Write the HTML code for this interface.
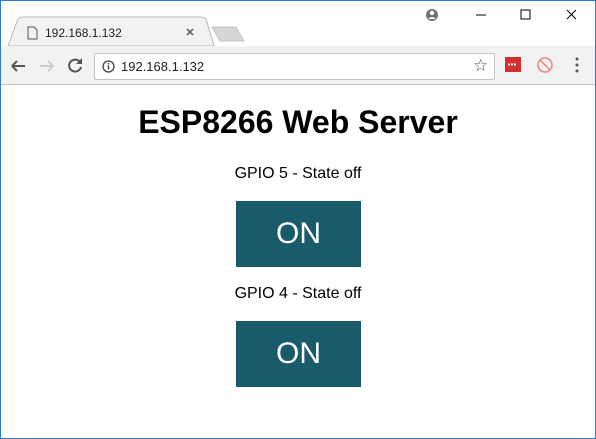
<!DOCTYPE html><html><head><style>
body{margin:0;width:596px;height:439px;overflow:hidden;font-family:"Liberation Sans",sans-serif;position:relative;background:#fff}
.frame{position:absolute;left:0;top:0;width:594px;height:437px;border:1px solid #2b79d0}
.tb{position:absolute;left:1px;top:46px;width:594px;height:38px;background:#f2f2f2;border-bottom:1px solid #c8c8c8}
.addr{position:absolute;left:94px;top:53px;width:399px;height:25px;background:#fff;border:1px solid #c4c4c4;border-radius:2px;font-size:13px;color:#222}
.btn{position:absolute;left:236px;width:125px;height:66px;background:#195b6a;color:#fff;font-size:30px;text-align:center;line-height:66px}
.t{position:absolute;left:0;width:596px;text-align:center}
</style></head><body>
<div class="frame"></div>
<svg style="position:absolute;left:0;top:0" width="596" height="90">
<path d="M8 46 L18 19 Q20 17 24 17 L200 17 Q204 17 206 19 L214 46 Z" fill="#f2f2f2" stroke="#b8b8b8"/>
<path d="M212 27 L236 27 L244 41 L220 41 Z" fill="#d6d6d6" stroke="#c4c4c4"/>
<path d="M28 27h6l3 3v9h-9z" fill="none" stroke="#555"/>
<path d="M187 29l6 6M193 29l-6 6" stroke="#555" stroke-width="1.5"/>
<circle cx="432" cy="15" r="6" fill="#707070"/><circle cx="432" cy="13" r="2.2" fill="#fff"/><path d="M428 19q4-4 8 0" fill="#fff"/>
<path d="M476 15h10" stroke="#000"/><rect x="521" y="10" width="9" height="9" fill="none" stroke="#000"/>
<path d="M567 10l9 9M576 10l-9 9" stroke="#000"/>
</svg>
<div class="tb"></div>
<svg style="position:absolute;left:0;top:46px" width="596" height="38">
<path d="M12 20h13M12 20l5-5M12 20l5 5" stroke="#555" stroke-width="2" fill="none"/>
<path d="M40 20h13M53 20l-5-5M53 20l-5 5" stroke="#ccc" stroke-width="2" fill="none"/>
<path d="M80 16a6 6 0 1 0 1 5" stroke="#555" stroke-width="2" fill="none"/><path d="M82 12v6h-6z" fill="#555"/>
<rect x="505" y="11" width="16" height="15" fill="#d32f2f"/><path d="M508 18.5h8" stroke="#fff" stroke-width="2" stroke-dasharray="2 1"/>
<circle cx="545" cy="19" r="7" fill="none" stroke="#e8877c" stroke-width="1.5"/><path d="M540 14l10 10" stroke="#e8877c" stroke-width="1.5"/>
<circle cx="577" cy="13" r="1.5" fill="#555"/><circle cx="577" cy="19" r="1.5" fill="#555"/><circle cx="577" cy="25" r="1.5" fill="#555"/>
</svg>
<div class="addr"><svg style="position:absolute;left:7px;top:6px" width="13" height="13"><circle cx="6.5" cy="6.5" r="5.5" fill="none" stroke="#444" stroke-width="1.3"/><path d="M6.5 5.5v4" stroke="#444" stroke-width="1.5"/><circle cx="6.5" cy="3.7" r="0.9" fill="#444"/></svg>
<span style="position:absolute;left:26px;top:5px">192.168.1.132</span>
<span style="position:absolute;left:378px;top:2px;font-size:17px;color:#555">☆</span></div>
<div style="position:absolute;left:45px;top:26px;font-size:12px;color:#222">192.168.1.132</div>
<div class="t" style="top:104px;font-size:32px;font-weight:bold">ESP8266 Web Server</div>
<div class="t" style="top:165px;font-size:16px">GPIO 5 - State off</div>
<div class="btn" style="top:201px">ON</div>
<div class="t" style="top:285px;font-size:16px">GPIO 4 - State off</div>
<div class="btn" style="top:321px">ON</div>
</body></html>
